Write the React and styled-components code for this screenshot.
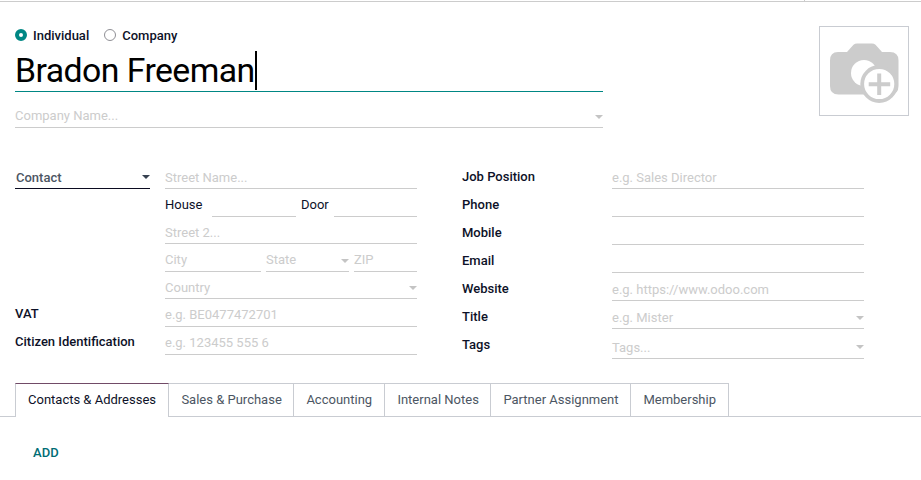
import React from "react";
import styled, { createGlobalStyle, css } from "styled-components";

const Global = createGlobalStyle`
  *, *::before, *::after { box-sizing: border-box; }
  body {
    margin: 0;
    background: #fff;
    color: #0d1128;
    font: 400 13px/15px Roboto, "Liberation Sans", sans-serif;
    overflow: hidden;
  }
`;

const Sheet = styled.main`
  height: 480px;
  display: flex;
  flex-direction: column;
`;

const TopRule = styled.div`
  flex: none;
  height: 2px;
  border-bottom: 1px solid #ccc;
`;

const Divider = styled.div`
  width: 1px;
  height: 1px;
  margin-left: 804px;
  background: #ccc;
`;

const Header = styled.header`
  display: flex;
  justify-content: space-between;
  height: 159px;
  padding: 24px 12px 0 15px;
`;

const Identity = styled.div`
  width: 588px;
`;

const Radios = styled.div`
  display: flex;
  gap: 15px;
  height: 20px;
  padding-top: 2px;
`;

const RadioLabel = styled.label`
  display: flex;
  gap: 6px;
  height: 15px;
  font-weight: 500;
`;

const RadioDot = styled.span`
  width: 12px;
  height: 12px;
  margin-top: 1px;
  border-radius: 50%;
  background: #fff;
  border: ${(p) => (p.$on ? "4px solid #008784" : "1px solid #8f8f95")};
`;

const Name = styled.h1`
  display: flex;
  align-items: center;
  height: 46px;
  padding-top: 4px;
  margin: 0;
  border-bottom: 1px solid #008784;
  font-size: 33.8px;
  line-height: 40px;
  font-weight: 400;
  letter-spacing: -0.56px;
  color: #000;
`;

const Caret = styled.span`
  width: 2px;
  height: 39px;
  background: #000;
`;

const Photo = styled.div`
  display: grid;
  place-items: center;
  width: 90px;
  height: 90px;
  border: 1px solid #c9ccd2;
`;

const Columns = styled.div`
  display: grid;
  grid-template-columns: 402px 402px;
  column-gap: 45px;
  padding-left: 15px;
  height: 222px;
  align-items: start;
`;

const Row = styled.div`
  display: grid;
  grid-template-columns: 135px 252px;
  column-gap: 15px;
  align-items: end;
  height: ${(p) => p.$h || 28}px;
`;

const Label = styled.span`
  font-weight: 500;
  white-space: nowrap;
  padding-bottom: ${(p) => p.$pad || 5}px;
`;

const SubLabel = styled.span`
  padding-bottom: 5px;
`;

const Parts = styled.div`
  display: grid;
  grid-template-columns: ${(p) => p.$cols};
  column-gap: 5px;
  align-items: end;
`;

const Field = styled.div`
  display: flex;
  justify-content: space-between;
  height: ${(p) => (p.$raise ? 20 : 19)}px;
  border-bottom: 1px solid #ccc;
  color: #ccc;
  white-space: nowrap;
  ${(p) =>
    p.$strong &&
    css`
      padding-left: 1px;
      border-color: #0b0b20;
      color: #4c5663;
      font-weight: 500;
    `}
`;

const CompanyField = styled(Field)`
  margin-top: 16px;
`;

const Arrow = styled.i`
  width: 8px;
  height: 4px;
  margin-top: ${(p) => p.$top ?? 6}px;
  background: ${(p) => p.$color || "#c4c4c4"};
  clip-path: polygon(0 0, 100% 0, 50% 100%);
`;

const Tabs = styled.nav`
  display: flex;
  flex: none;
  height: 34px;
  padding-left: 15px;
  background: linear-gradient(#c9ccd2, #c9ccd2) bottom / 100% 1px no-repeat;
`;

const Tab = styled.span`
  width: ${(p) => p.$w}px;
  padding-top: 8px;
  padding-left: 12.4px;
  white-space: nowrap;
  color: #4c5663;
  border-top: 1px solid #c9ccd2;
  border-right: 1px solid #c9ccd2;
  ${(p) =>
    p.$active &&
    css`
      padding-left: 12px;
      color: #0d1128;
      background: #fff;
      border-left: 1px solid #c9ccd2;
      border-top-color: #714b67;
    `}
`;

const AddButton = styled.button`
  align-self: flex-start;
  margin: 28px 0 0 33px;
  padding: 0;
  border: 0;
  background: none;
  color: #006d75;
  font: 500 13px/15px Roboto, sans-serif;
  letter-spacing: 0.1px;
`;

const CameraIcon = () => (
  <svg width="88" height="88" viewBox="0 0 88 88">
    <path
      d="M18 25h9l6.500-7.200q1.500-1.300 3.500-1.300h15q2 0 3.500 1.300L62 25h8q8.500 0 8.500 8.500v25.500q0 8.500-8.500 8.500H18.500q-8.500 0-8.500-8.500V33.500q0-8.500 8-8.500z"
      fill="#ccc"
    />
    <circle cx="44" cy="46" r="13" fill="#fff" />
    <circle cx="59.200" cy="57" r="17" fill="#fff" stroke="#ccc" strokeWidth="3.800" />
    <path d="M59.200 46.500v21.500M48.700 57.200h21.500" stroke="#ccc" strokeWidth="4" />
  </svg>
);

const contactRows = [
  ["Job Position", "e.g. Sales Director"],
  ["Phone", ""],
  ["Mobile", ""],
  ["Email", ""],
  ["Website", "e.g. https://www.odoo.com"],
  ["Title", "e.g. Mister", true],
];

const tabs = [
  ["Contacts & Addresses", 154],
  ["Sales & Purchase", 125],
  ["Accounting", 91],
  ["Internal Notes", 106],
  ["Partner Assignment", 140],
  ["Membership", 98],
];

export default function App() {
  return (
    <>
      <Global />
      <Sheet>
        <TopRule><Divider /></TopRule>
        <Header>
          <Identity>
            <Radios>
              <RadioLabel><RadioDot $on />Individual</RadioLabel>
              <RadioLabel><RadioDot />Company</RadioLabel>
            </Radios>
            <Name>Bradon Freeman<Caret /></Name>
            <CompanyField $raise>
              Company Name...<Arrow $top={7} />
            </CompanyField>
          </Identity>
          <Photo><CameraIcon /></Photo>
        </Header>
        <Columns>
          <div>
            <Row>
              <Field $strong>Contact<Arrow $color="#374151" $top={5} /></Field>
              <Field>Street Name...</Field>
            </Row>
            <Row>
              <span />
              <Parts $cols="42px 84px 28px 83px">
                <SubLabel>House</SubLabel>
                <Field />
                <SubLabel>Door</SubLabel>
                <Field />
              </Parts>
            </Row>
            <Row $h={27}>
              <span />
              <Field>Street 2...</Field>
            </Row>
            <Row>
              <span />
              <Parts $cols="96px 83px 63px">
                <Field $raise>City</Field>
                <Field $raise>State<Arrow $top={7} /></Field>
                <Field $raise>ZIP</Field>
              </Parts>
            </Row>
            <Row $h={27}>
              <span />
              <Field>Country<Arrow /></Field>
            </Row>
            <Row>
              <Label $pad={6}>VAT</Label>
              <Field $raise>e.g. BE0477472701</Field>
            </Row>
            <Row>
              <Label $pad={6}>Citizen Identification</Label>
              <Field $raise>e.g. 123455 555 6</Field>
            </Row>
          </div>
          <div>
            {contactRows.map(([label, hint, menu]) => (
              <Row key={label}>
                <Label>{label}</Label>
                <Field>{hint}{menu && <Arrow />}</Field>
              </Row>
            ))}
            <Row $h={30}>
              <Label $pad={7}>Tags</Label>
              <Field>Tags...<Arrow $top={5} /></Field>
            </Row>
          </div>
        </Columns>
        <Tabs>
          {tabs.map(([name, width], i) => (
            <Tab key={name} $w={width} $active={i === 0}>{name}</Tab>
          ))}
        </Tabs>
        <AddButton>ADD</AddButton>
      </Sheet>
    </>
  );
}
